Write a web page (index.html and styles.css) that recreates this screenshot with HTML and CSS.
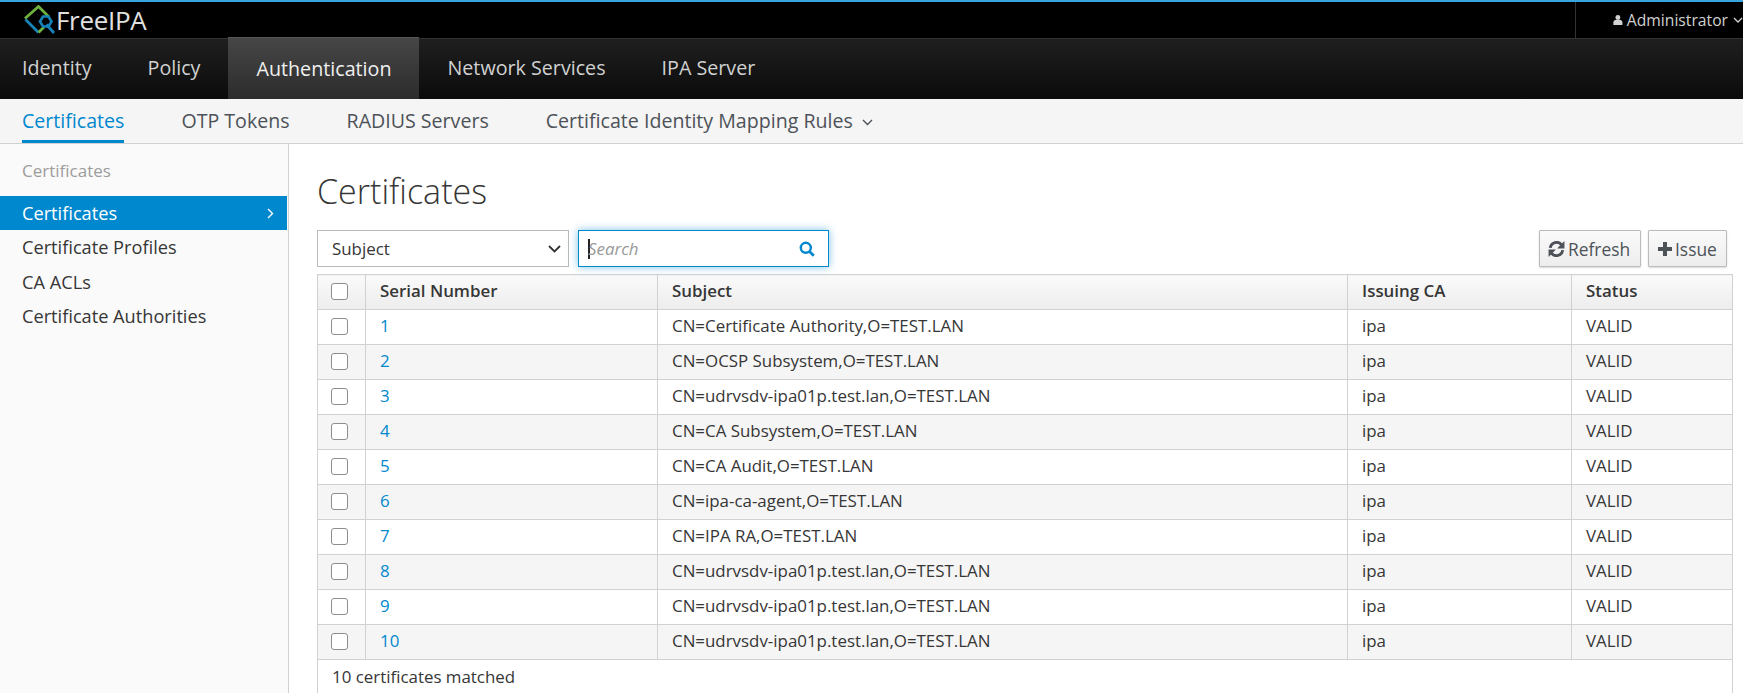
FILE: index.html
```html
<!DOCTYPE html>
<html lang="en">
<head>
    <meta charset="UTF-8">
    <title>FreeIPA - Certificates</title>
    <link rel="stylesheet" href="styles.css">
</head>
<body>
<div class="topbar">
    <div class="brand">
        <svg class="brand-mark" width="32" height="30" viewBox="0 0 32 30" fill="none">
            <path d="M1.5 14.5 L14.5 27.5" stroke="#1583b8" stroke-width="2.8"/>
            <path d="M1 13.5 L14.5 1.5 L25 12" stroke="#6fb13d" stroke-width="2.8"/>
            <path d="M14.5 27.5 L20 22" stroke="#6fb13d" stroke-width="2.8"/>
            <path d="M19 11.5 H24.5 L27.5 16.5 L24.5 21.5 H19 L16 16.5 Z" stroke="#1583b8" stroke-width="2.6"/>
            <path d="M22.5 19.5 L30 28" stroke="#1583b8" stroke-width="2.8"/>
        </svg>
        <span class="brand-name">FreeIPA</span>
    </div>
    <div class="user-menu">
        <svg class="user-icon" width="13" height="14" viewBox="0 0 13 14"><circle cx="6.5" cy="3.6" r="3.3" fill="#d1d1d1"/><path d="M0.5 13.6 V10 C0.5 8 2.5 6.8 4 6.8 H9 C10.5 6.8 12.5 8 12.5 10 V13.6 Z" fill="#d1d1d1"/></svg>
        <span>Administrator</span>
        <svg class="user-caret" width="10" height="6" viewBox="0 0 10 6" fill="none"><path d="M1 1 L5 5 L9 1" stroke="#d1d1d1" stroke-width="1.3"/></svg>
    </div>
</div>

<ul class="mainnav">
    <li>Identity</li>
    <li>Policy</li>
    <li class="active">Authentication</li>
    <li>Network Services</li>
    <li>IPA Server</li>
</ul>

<ul class="subnav">
    <li class="active">Certificates</li>
    <li>OTP Tokens</li>
    <li>RADIUS Servers</li>
    <li>Certificate Identity Mapping Rules
        <svg class="sub-caret" width="11" height="7" viewBox="0 0 11 7" fill="none"><path d="M1 1 L5.5 5.5 L10 1" stroke="#4d5258" stroke-width="1.4"/></svg>
    </li>
</ul>

<div class="page">
    <div class="sidebar">
        <div class="side-title">Certificates</div>
        <ul class="side-list">
            <li class="active">Certificates
                <svg width="7" height="11" viewBox="0 0 7 11" fill="none"><path d="M1 1 L5.5 5.5 L1 10" stroke="#fff" stroke-width="1.4"/></svg>
            </li>
            <li>Certificate Profiles</li>
            <li>CA ACLs</li>
            <li>Certificate Authorities</li>
        </ul>
    </div>

    <div class="content">
        <h1>Certificates</h1>
        <div class="toolbar">
            <div class="select">Subject
                <svg width="13" height="8" viewBox="0 0 13 8" fill="none"><path d="M1 1 L6.5 6.5 L12 1" stroke="#333" stroke-width="1.8"/></svg>
            </div>
            <div class="search">
                <span class="cursor"></span>
                <span class="placeholder">Search</span>
                <svg width="16" height="16" viewBox="0 0 16 16" fill="none"><circle cx="6.8" cy="6.8" r="5" stroke="#0088ce" stroke-width="2.4"/><path d="M10.5 10.5 L14.8 14.8" stroke="#0088ce" stroke-width="2.8"/></svg>
            </div>
            <div class="actions">
                <button class="btn">
                    <svg width="17" height="16" viewBox="0 0 15 14" fill="none"><path d="M2 6 A5.6 5.6 0 0 1 12 3.4" stroke="#4d5258" stroke-width="2.6"/><path d="M14.5 0 V6.5 H8 Z" fill="#4d5258"/><path d="M13 8 A5.6 5.6 0 0 1 3 10.6" stroke="#4d5258" stroke-width="2.6"/><path d="M0.5 14 V7.5 H7 Z" fill="#4d5258"/></svg>
                    Refresh
                </button>
                <button class="btn">
                    <svg width="14" height="14" viewBox="0 0 14 14"><path d="M5 0 H9 V5 H14 V9 H9 V14 H5 V9 H0 V5 H5 Z" fill="#4d5258"/></svg>
                    Issue
                </button>
            </div>
        </div>

        <table class="grid">
            <colgroup>
                <col class="col-check"><col class="col-serial"><col class="col-subject"><col class="col-ca"><col>
            </colgroup>
            <thead>
                <tr><th class="check"><span class="box"></span></th><th>Serial Number</th><th>Subject</th><th>Issuing CA</th><th>Status</th></tr>
            </thead>
            <tbody>
                <tr><td class="check"><span class="box"></span></td><td><a>1</a></td><td>CN=Certificate Authority,O=TEST.LAN</td><td>ipa</td><td>VALID</td></tr>
                <tr><td class="check"><span class="box"></span></td><td><a>2</a></td><td>CN=OCSP Subsystem,O=TEST.LAN</td><td>ipa</td><td>VALID</td></tr>
                <tr><td class="check"><span class="box"></span></td><td><a>3</a></td><td>CN=udrvsdv-ipa01p.test.lan,O=TEST.LAN</td><td>ipa</td><td>VALID</td></tr>
                <tr><td class="check"><span class="box"></span></td><td><a>4</a></td><td>CN=CA Subsystem,O=TEST.LAN</td><td>ipa</td><td>VALID</td></tr>
                <tr><td class="check"><span class="box"></span></td><td><a>5</a></td><td>CN=CA Audit,O=TEST.LAN</td><td>ipa</td><td>VALID</td></tr>
                <tr><td class="check"><span class="box"></span></td><td><a>6</a></td><td>CN=ipa-ca-agent,O=TEST.LAN</td><td>ipa</td><td>VALID</td></tr>
                <tr><td class="check"><span class="box"></span></td><td><a>7</a></td><td>CN=IPA RA,O=TEST.LAN</td><td>ipa</td><td>VALID</td></tr>
                <tr><td class="check"><span class="box"></span></td><td><a>8</a></td><td>CN=udrvsdv-ipa01p.test.lan,O=TEST.LAN</td><td>ipa</td><td>VALID</td></tr>
                <tr><td class="check"><span class="box"></span></td><td><a>9</a></td><td>CN=udrvsdv-ipa01p.test.lan,O=TEST.LAN</td><td>ipa</td><td>VALID</td></tr>
                <tr><td class="check"><span class="box"></span></td><td><a>10</a></td><td>CN=udrvsdv-ipa01p.test.lan,O=TEST.LAN</td><td>ipa</td><td>VALID</td></tr>
            </tbody>
        </table>
        <div class="grid-foot">10 certificates matched</div>
    </div>
</div>
</body>
</html>
```

FILE: styles.css
```css
* {
    padding: 0;
    margin: 0;
    list-style: none;
    box-sizing: border-box;
}

html, body {
    height: 100%;
    overflow: hidden;
}

body {
    display: flex;
    flex-direction: column;
    font-family: "Open Sans", "Liberation Sans", sans-serif;
    font-size: 16.9px;
    color: #363636;
    background: #fff;
}

.topbar {
    height: 38px;
    flex: none;
    display: flex;
    justify-content: space-between;
    background: #000;
    border-top: 2px solid #39a5dc;
}

.brand {
    display: flex;
    align-items: center;
    padding-left: 24px;
}

.brand-name {
    font-size: 26px;
    letter-spacing: -0.3px;
    color: #e0e0e0;
}

.user-menu {
    width: 168px;
    display: flex;
    align-items: center;
    padding-left: 37px;
    border-left: 1px solid #333;
    font-size: 15.7px;
    color: #d1d1d1;
    white-space: nowrap;
}

.user-icon {
    margin-right: 4px;
}

.user-caret {
    margin-left: 5px;
    flex: none;
}

.mainnav {
    height: 61px;
    flex: none;
    display: flex;
    padding-left: 22px;
    font-size: 19.7px;
    color: #d1d1d1;
    line-height: 58px;
    background: linear-gradient(#1f1f1f, #0b0b0b);
    border-top: 1px solid #333;
}

.mainnav li {
    padding: 0 28px;
}

.mainnav li:first-child {
    padding-left: 0;
}

.mainnav li.active {
    margin-top: -2px;
    padding-top: 2px;
    color: #f0f0f0;
    background: linear-gradient(#464646, #2c2c2c);
    border-top: 1px solid #555;
}

.subnav {
    height: 45px;
    flex: none;
    display: flex;
    gap: 57px;
    padding-left: 22px;
    font-size: 19.6px;
    line-height: 44px;
    color: #4d5258;
    background: #f5f5f5;
    border-bottom: 1px solid #d1d1d1;
}

.subnav li {
    height: 44px;
}

.subnav li.active {
    color: #0088ce;
    border-bottom: 3px solid #0088ce;
}

.sub-caret {
    margin-left: 4px;
    vertical-align: 2px;
}

.page {
    flex: 1;
    min-height: 0;
    display: flex;
}

.sidebar {
    width: 289px;
    flex: none;
    background: #fafafa;
    border-right: 1px solid #d1d1d1;
    padding-right: 1px;
    font-size: 18.2px;
}

.side-title {
    height: 52px;
    padding: 15px 0 0 22px;
    font-size: 17px;
    color: #9c9c9c;
}

.side-list li {
    height: 34.3px;
    line-height: 34px;
    padding: 0 13px 0 22px;
    color: #363636;
    display: flex;
    justify-content: space-between;
    align-items: center;
}

.side-list li.active {
    color: #fff;
    background: #0088ce;
}

.content {
    flex: 1;
    min-width: 0;
    padding: 0 10px 0 28px;
}

h1 {
    height: 86px;
    padding-top: 25px;
    font-size: 34px;
    font-weight: 300;
    line-height: 44px;
    color: #363636;
}

.toolbar {
    height: 37px;
    display: flex;
    gap: 9px;
    margin-bottom: 7px;
}

.select {
    width: 252px;
    display: flex;
    justify-content: space-between;
    align-items: center;
    padding: 0 7px 0 14px;
    border: 1px solid #bbb;
    background: #fff;
}

.search {
    width: 251px;
    display: flex;
    align-items: center;
    padding: 0 13px 0 9px;
    border: 1px solid #0088ce;
    box-shadow: 0 0 8px rgba(0, 136, 206, 0.5);
}

.cursor {
    width: 2px;
    height: 20px;
    margin-right: -2px;
    background: #222;
}

.placeholder {
    flex: 1;
    font-style: italic;
    color: #999;
}

.actions {
    margin-left: auto;
    margin-right: 6px;
    display: flex;
    gap: 7px;
}

.btn {
    display: flex;
    align-items: center;
    gap: 3px;
    width: 102px;
    padding: 0 8px;
    font-family: inherit;
    font-size: 17.4px;
    color: #4d5258;
    background: linear-gradient(#fafafa, #ededed);
    border: 1px solid #bbb;
    border-radius: 1px;
    box-shadow: 0 1px 2px rgba(0, 0, 0, 0.15);
}

.btn:last-child {
    width: 79px;
    padding-left: 9px;
}

.grid {
    width: 100%;
    table-layout: fixed;
    border-collapse: collapse;
}

.col-check { width: 48px; }
.col-serial { width: 292px; }
.col-subject { width: 690px; }
.col-ca { width: 224px; }

.grid th, .grid td {
    height: 35px;
    padding: 0 14px 4px;
    border: 1px solid #d1d1d1;
    text-align: left;
    white-space: nowrap;
}

.grid th {
    font-weight: 600;
    background: linear-gradient(#fafafa, #ededed);
}

.grid .check {
    padding: 0 13px 2px;
}

.grid tbody tr:nth-child(even) td {
    background: #f5f5f5;
}

.box {
    display: block;
    width: 17px;
    height: 17px;
    background: #fff;
    border: 1px solid #8b8d8f;
    border-radius: 3px;
}

.grid a {
    color: #0088ce;
}

.grid-foot {
    height: 60px;
    padding: 5px 14px;
    border: 1px solid #d1d1d1;
    border-top: 0;
}
```
